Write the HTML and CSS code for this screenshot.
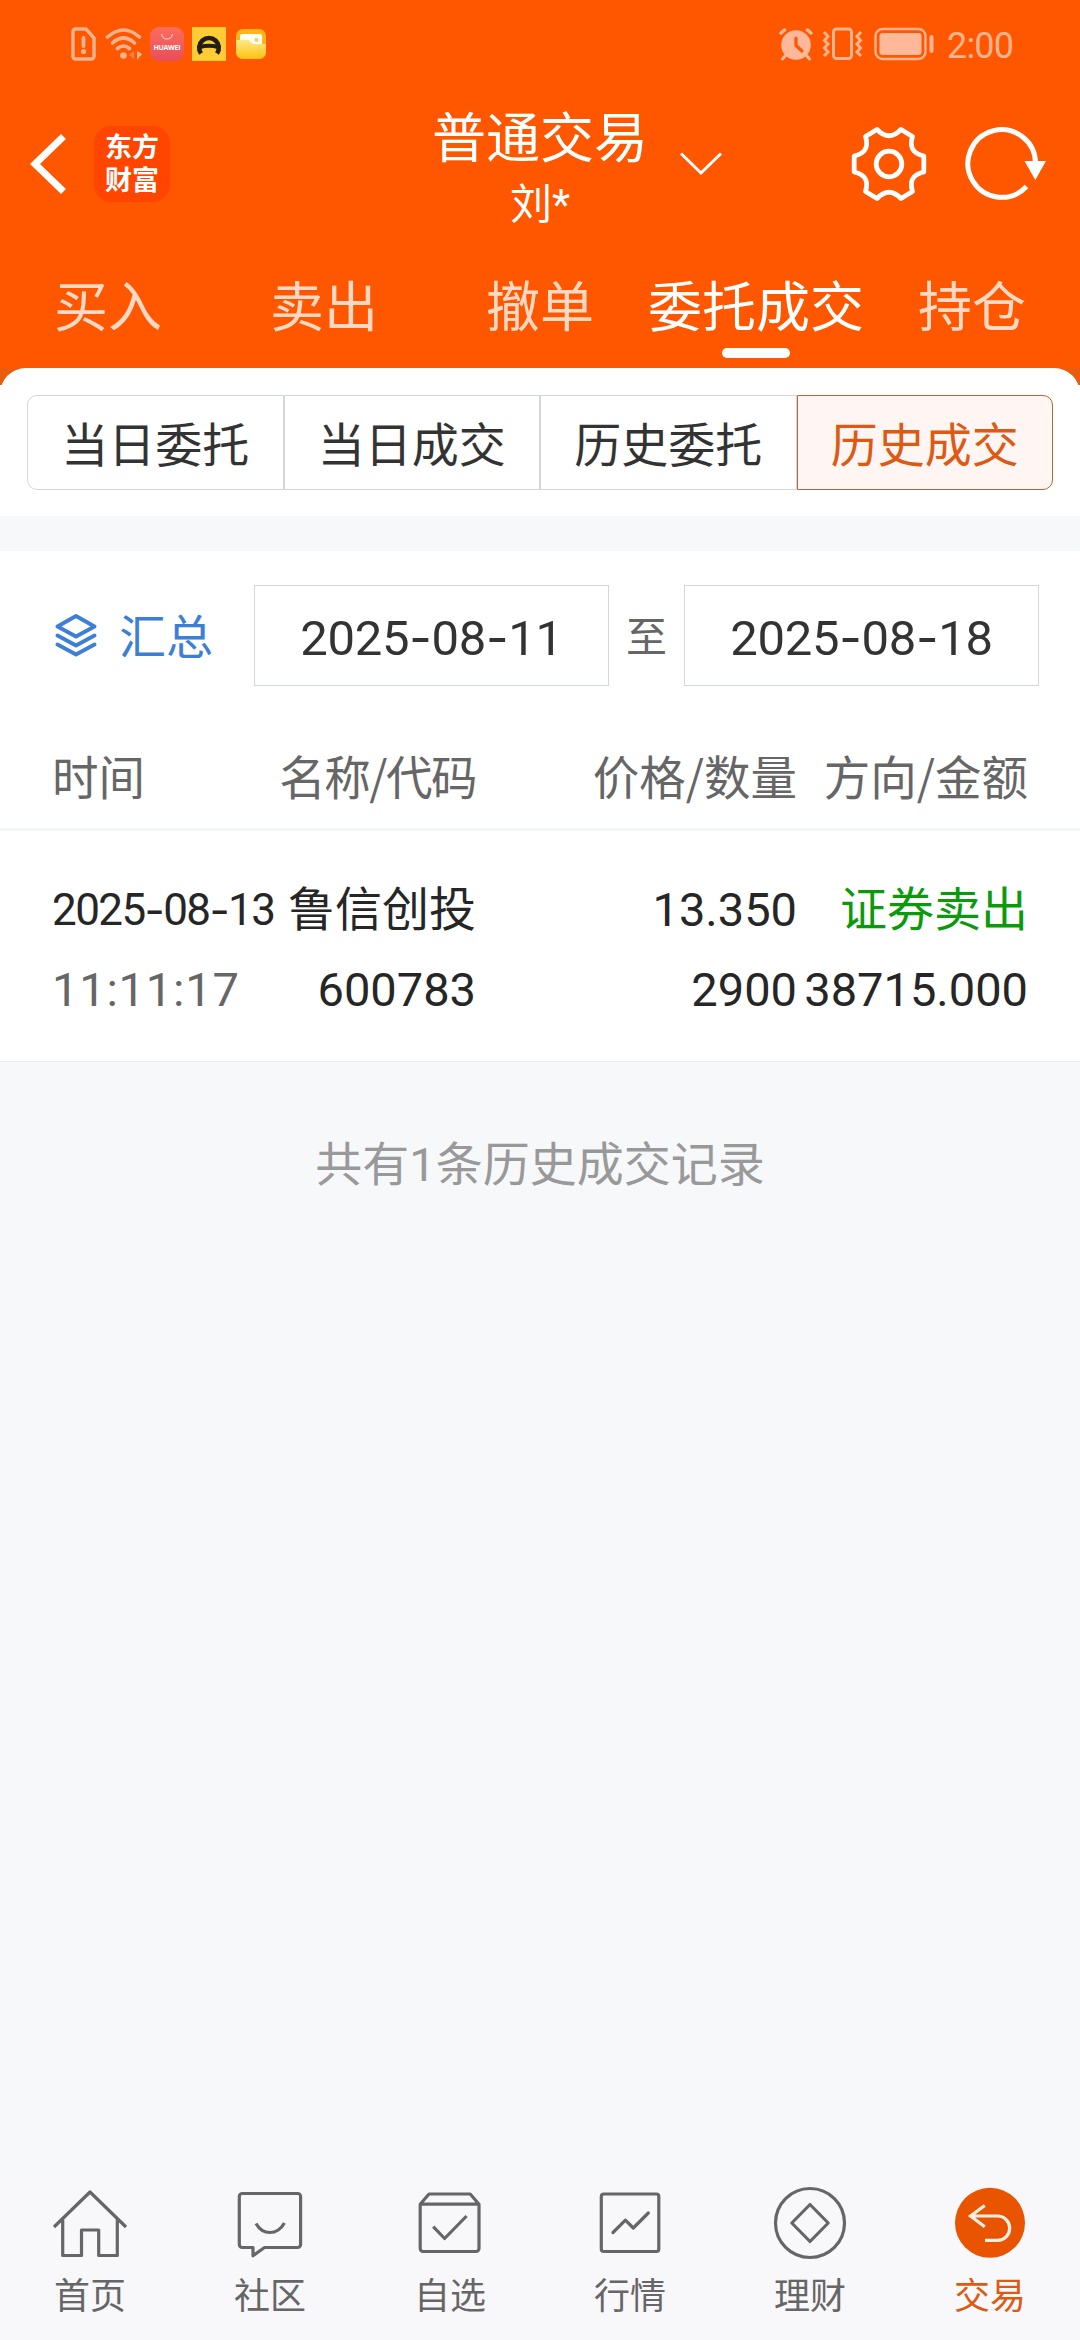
FILE: index.html
```html
<!DOCTYPE html>
<html lang="zh-CN">
<head>
<meta charset="utf-8">
<title>普通交易</title>
<link rel="stylesheet" href="styles.css">
</head>
<body>
<div class="app">
  <header class="top">
    <div class="status">
      <svg class="ic-sim" width="25" height="34" viewBox="0 0 25 34" fill="none" stroke="#ffb38f" stroke-width="3.4"><path d="M4.5 2H15l8 9v18.500a2.500 2.500 0 0 1-2.500 2.500h-16A2.500 2.500 0 0 1 2 29.500v-25A2.500 2.500 0 0 1 4.500 2z"/><path d="M12.500 11v8" stroke-linecap="round" stroke-width="3.800"/><circle cx="12.500" cy="24.500" r="2.600" fill="#ffb38f" stroke="none"/></svg>
      <svg class="ic-wifi" width="37" height="34" viewBox="0 0 37 34" fill="none" stroke="#ffb38f" stroke-width="3.600" stroke-linecap="round"><path d="M2.500 10Q18.500-4 34.500 10M7.500 16Q18.500 6 29.500 16M12.500 21.500Q18.500 16.500 24.500 21.500"/><circle cx="18.500" cy="28.500" r="3.300" fill="#ffb38f" stroke="none"/><path d="M29 24v8l-5-4z" fill="#ff7f45" stroke="none"/><path d="M32 24v9l5-6z" fill="#ffb38f" stroke="none"/></svg>
      <svg class="ic-shop" width="34" height="34" viewBox="0 0 34 34"><defs><linearGradient id="shop" x1="0" y1="0" x2="0" y2="1"><stop offset="0" stop-color="#fd6d5c"/><stop offset="1" stop-color="#e84d5c"/></linearGradient></defs><rect width="34" height="34" rx="9" fill="url(#shop)"/><path d="M11.500 7q1 5 5.500 5t5.500-5" fill="none" stroke="#ffd0c8" stroke-width="1.200"/><text x="17" y="22.500" text-anchor="middle" textLength="27" class="shop-name">HUAWEI</text></svg>
      <svg class="ic-auto" width="34" height="34" viewBox="0 0 34 34"><rect width="34" height="34" fill="#ffcc35"/><path d="M9 26.500A9.800 9.800 0 1 1 25 26.500" fill="none" stroke="#221f18" stroke-width="4.600"/><path d="M8 20Q17 17.500 26 20" fill="none" stroke="#221f18" stroke-width="4.200"/></svg>
      <svg class="ic-files" width="30" height="30" viewBox="0 0 30 30"><defs><linearGradient id="files" x1="0" y1="0" x2="0" y2="1"><stop offset="0" stop-color="#ffe88a"/><stop offset="1" stop-color="#ffc20d"/></linearGradient></defs><rect width="30" height="30" rx="7" fill="#ffb41c"/><rect x="4" y="5" width="22" height="14" rx="2" fill="#fffdf0"/><path d="M0 11h13l4 4h13v8a7 7 0 0 1-7 7H7a7 7 0 0 1-7-7z" fill="url(#files)"/><path d="M4 7h22v8h-9l-4-4H4z" fill="#fffdf0"/><circle cx="20.500" cy="11" r="2" fill="#e8cf75"/></svg>
      <div class="status-right">
        <svg width="34" height="34" viewBox="0 0 34 34" fill="none" stroke="#ffb99a" stroke-linecap="round"><circle cx="17" cy="18" r="14.800" fill="#ffb99a" stroke="none"/><path d="M2 6l3.500-3M32 6l-3.500-3" stroke-width="3.500"/><path d="M7 28l-3.500 4M27 28l3.500 4" stroke-width="3"/><path d="M17 11v7.500l6 5.500" stroke="#ff5600" stroke-width="3.200"/></svg>
        <svg class="ic-vib" width="41" height="34" viewBox="0 0 41 34" fill="none" stroke="#ffb38f" stroke-width="3"><rect x="11.500" y="2" width="18" height="29.500" rx="3"/><path d="M2 5l4 4.500-3.500 4L6 17l-3.500 4L6 25l-4 4M39 5l-4 4.500 3.500 4L35 17l3.500 4-3.500 4 4 4"/></svg>
        <svg class="ic-bat" width="60" height="34" viewBox="0 0 60 34" fill="none" stroke="#ffb38f" stroke-width="2.400"><rect x="1.500" y="2" width="50" height="30" rx="7"/><rect x="5.500" y="6" width="42" height="22" rx="3" fill="#ffb99a" stroke="none"/><path d="M57.500 10v14" stroke-width="4" stroke-linecap="round"/></svg>
        <span class="clock">2:00</span>
      </div>
    </div>

    <div class="titlebar">
      <div class="title-left">
        <svg class="back" width="36" height="62" viewBox="0 0 36 62" fill="none" stroke="#fff" stroke-width="7"><path d="M33.500 3.500L5 31l28.500 27.500"/></svg>
        <div class="logo">东方<br>财富</div>
      </div>
      <div class="title">
        <div class="title-main">普通交易</div>
        <div class="title-sub">刘*</div>
      </div>
      <div class="title-right">
        <svg class="down" width="42" height="24" viewBox="0 0 42 24" fill="none" stroke="#fff" stroke-width="3"><path d="M1 1.500l20 19.500L41 1.500"/></svg>
        <svg class="gear" width="76" height="76" viewBox="-38 -38 76 76" fill="none" stroke="#fff" stroke-width="4.800" stroke-linejoin="round"><path d="M12-34.500L23.500-27.500Q18.500-11.500 34.800-8V8Q18.500 11.500 23.500 27.500L12 34.500Q0 22-12 34.500L-23.500 27.500Q-18.500 11.500-34.800 8V-8Q-18.500-11.500-23.500-27.500L-12-34.500Q0-22 12-34.500z"/><circle r="12.800"/></svg>
        <svg class="reload" width="82" height="76" viewBox="0 0 82 76" fill="none" stroke="#fff" stroke-width="5"><path d="M61.500 60.500A33.800 33.800 0 1 1 70.500 38"/><path d="M59.500 35H81L70.300 54z" fill="#fff" stroke="none"/></svg>
      </div>
    </div>

    <nav class="tabs">
      <a>买入</a><a>卖出</a><a>撤单</a><a class="on">委托成交</a><a>持仓</a>
    </nav>
  </header>

  <div class="sheet-wrap">
    <section class="sheet">
      <div class="segments">
        <a>当日委托</a><a>当日成交</a><a>历史委托</a><a class="on">历史成交</a>
      </div>
    </section>
  </div>

  <section class="panel">
    <div class="filter">
      <svg class="layers" width="42" height="44" viewBox="0 0 42 44" fill="none" stroke="#3d7fd4" stroke-width="3.800" stroke-linejoin="round" stroke-linecap="round"><path d="M21 3L39.500 13.500 21 23.500 2.500 13.500z"/><path d="M2.500 22.500L21 32.500 39.500 22.500M2.500 31.500L21 41.500 39.500 31.500"/></svg>
      <span class="sum">汇总</span>
      <div class="date-box">2025<i>-</i>08<i>-</i>11</div>
      <span class="to">至</span>
      <div class="date-box">2025<i>-</i>08<i>-</i>18</div>
    </div>
    <div class="cols head">
      <div>时间</div><div class="name">名称/代码</div><div>价格/数量</div><div>方向/金额</div>
    </div>
    <div class="record">
      <div class="cols">
        <div class="day">2025<i>-</i>08<i>-</i>13</div><div>鲁信创投</div><div>13.350</div><div class="sell">证券卖出</div>
      </div>
      <div class="cols">
        <div class="time">11:11:17</div><div>600783</div><div>2900</div><div>38715.000</div>
      </div>
    </div>
  </section>

  <p class="summary">共有1条历史成交记录</p>

  <nav class="bottom">
    <a><svg width="76" height="76" viewBox="0 0 76 76"><path d="M2 43L38 8l36 35M10.700 35.500V71.500H29.500V46H46.700V71.500H65.300V35.500"/></svg>首页</a>
    <a><svg width="76" height="76" viewBox="0 0 76 76"><path d="M10.300 9.500H65.600a3 3 0 0 1 3 3V60.500a3 3 0 0 1-3 3H32.500L21 71.800V63.500H10.300a3 3 0 0 1-3-3V12.500a3 3 0 0 1 3-3z"/><path d="M24 39.500Q29 48.500 38 48.500T52.400 39"/></svg>社区</a>
    <a><svg width="76" height="76" viewBox="0 0 76 76"><path d="M8.200 20.200L17 10H58.200L67 20.200V64.500a3 3 0 0 1-3 3H11.200a3 3 0 0 1-3-3zH67"/><path d="M21.200 42.700L32.600 54.500 54.600 32"/></svg>自选</a>
    <a><svg width="76" height="76" viewBox="0 0 76 76"><rect x="9.300" y="10" width="57.500" height="57.500" rx="2.500"/><path d="M21 48.500L33.400 36.200 41.300 44 56.300 29" stroke-linecap="round"/></svg>行情</a>
    <a><svg width="76" height="76" viewBox="0 0 76 76"><circle cx="38" cy="39" r="34.500"/><path d="M38 20.500L56.200 39 38 57.500 19.800 39z"/></svg>理财</a>
    <a class="on"><svg width="76" height="76" viewBox="0 0 76 76"><circle cx="38" cy="38.800" r="35" fill="#e85400" stroke="none"/><path d="M32.800 21.500L18.500 32 32.800 42.800M18.500 32H45.500a12.200 12.200 0 0 1 0 24.400H33" stroke="#ffefe0" stroke-linejoin="miter"/></svg>交易</a>
  </nav>
</div>
</body>
</html>
```
FILE: styles.css
```css
* { box-sizing: border-box; }
body {
  margin: 0;
  width: 1080px;
  font-family: Roboto, "Noto Sans CJK SC", sans-serif;
  color: #262626;
}
i { font-style: normal; font-family: Inter, sans-serif; }
svg { display: block; flex: none; }
.app { height: 2340px; display: flex; flex-direction: column; background: #f7f8fa; overflow: hidden; }

.top { height: 368px; background: #ff5600; color: #fff; display: flex; flex-direction: column; }
.status { height: 88px; padding: 0 67px 0 71px; display: flex; align-items: center; }
.ic-wifi { margin-left: 9px; }
.ic-shop, .ic-auto { margin-left: 8px; }
.ic-files { margin-left: 10px; }
.shop-name { font: 700 7px "Open Sans", sans-serif; fill: #fff; }
.status-right { margin-left: auto; display: flex; align-items: center; color: #ffb38f; }
.ic-vib { margin-left: 9px; }
.ic-bat { margin-left: 11px; }
.clock { margin-left: 13px; width: 66px; padding-top: 3px; font-size: 36px; line-height: 40px; letter-spacing: -0.8px; white-space: nowrap; }

.titlebar { height: 152px; display: grid; grid-template-columns: 400px 280px 400px; align-items: center; }
.title-left { display: flex; align-items: center; padding-left: 30px; }
.logo {
  margin-left: 28px; width: 76px; height: 76px; border-radius: 17px; background: #ff4500;
  padding-top: 3px; text-align: center;
  font: 700 27px/33px "Noto Sans CJK SC", sans-serif;
}
.title { text-align: center; padding-top: 13px; }
.title-main { font-size: 54px; line-height: 68px; }
.title-sub { font-size: 42px; line-height: 61px; }
.title-right { display: flex; align-items: center; }
.gear { margin-left: 129px; }
.reload { margin-left: 38px; }

.tabs { height: 128px; display: grid; grid-template-columns: repeat(5, 216px); }
.tabs a {
  display: flex; flex-direction: column; align-items: center;
  padding-top: 29px; font-size: 54px; line-height: 79px; color: #ffd9c4; white-space: nowrap;
}
.tabs .on { color: #fff; }
.tabs .on::after { content: ""; width: 68px; height: 10px; border-radius: 5px; background: #fff; }

.sheet-wrap { background: linear-gradient(#e85c0c 17px, #fff 17px); }
.sheet { height: 148px; padding: 27px 27px 0; background: #fff; border-radius: 26px 26px 0 0; }
.segments { height: 95px; display: grid; grid-template-columns: repeat(4, 1fr); }
.segments a {
  border: 1px solid #d3d7d7; display: flex; align-items: center; justify-content: center;
  font-size: 47px; color: #333; padding-bottom: 2px;
}
.segments a:first-child { border-radius: 10px 0 0 10px; }
.segments .on { border-color: #b5663a; border-radius: 0 10px 10px 0; background: #fff6f3; color: #dc5a14; }

.panel { margin-top: 35px; background: #fff; border-bottom: 1px solid #ececec; height: 511px; }
.filter { height: 169px; padding: 34px 41px 0 55px; display: flex; }
.layers { margin-top: 28px; }
.sum { margin-left: 22px; width: 135px; font-size: 47px; line-height: 105px; color: #3d7fd4; }
.date-box {
  width: 355px; height: 101px; border: 1px solid #d3d7d7; text-align: center;
  font-size: 49px; line-height: 104px; color: #333; letter-spacing: -0.3px;
}
.to { flex: 1; text-align: center; font-size: 41px; line-height: 106px; color: #666; }

.cols {
  display: grid; grid-template-columns: 229px 195px 321px 231px; padding-left: 52px;
  white-space: nowrap; font-size: 47px;
}
.cols div { display: flex; justify-content: flex-end; }
.cols div:first-child { justify-content: flex-start; }
.head { height: 111px; font-family: "Noto Sans CJK SC", sans-serif; font-size: 46.500px; line-height: 110px; color: #666; border-bottom: 3px solid #f4f6f6; }
.head .name { letter-spacing: -1.5px; }
.record { padding-top: 39px; line-height: 80px; }
.cols .sell { color: #0b9a0b; }
.cols .day { font-size: 44px; letter-spacing: -1.6px; }
.cols .time { color: #666; letter-spacing: 0.8px; }

.summary { margin: 0; padding-top: 66px; text-align: center; font-size: 47px; line-height: 74px; color: #999; }

.bottom { margin-top: auto; height: 170px; padding-top: 14px; display: grid; grid-template-columns: repeat(6, 180px); background: #f8f8fa; }
.bottom a { display: flex; flex-direction: column; align-items: center; font-size: 36px; line-height: 75px; color: #666; }
.bottom svg { fill: none; stroke: #666; stroke-width: 3.2; stroke-linejoin: round; }
.bottom .on { color: #dc5a14; }
```
